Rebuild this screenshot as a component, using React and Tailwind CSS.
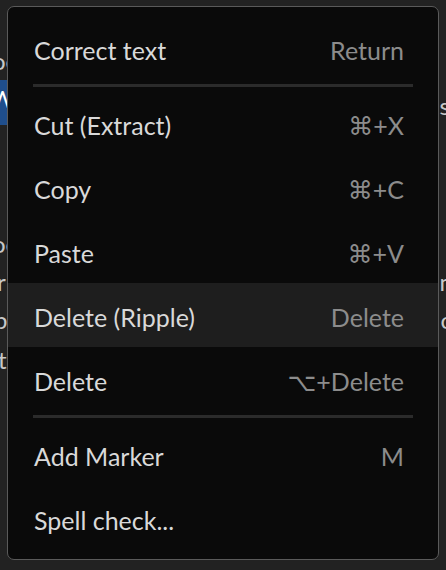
const items = [
  { label: "Correct text", key: "Return" },
  "sep",
  { label: "Cut (Extract)", key: "⌘+X" },
  { label: "Copy", key: "⌘+C" },
  { label: "Paste", key: "⌘+V" },
  { label: "Delete (Ripple)", key: "Delete", active: true },
  { label: "Delete", key: "⌥+Delete" },
  "sep",
  { label: "Add Marker", key: "M" },
  { label: "Spell check...", key: "" },
];

function Backdrop() {
  // document text sitting under the context menu
  return (
    <div className="flex flex-col text-[24px] leading-[38px] text-[#c8c8c8]">
      <div className="mt-[42px] flex justify-between">
        <span className="-ml-[8px]">oc</span>
        <span></span>
      </div>
      <div className="flex justify-between">
        <span className="-ml-[12px] bg-[#1f4e8c] px-[2px] text-white">W</span>
        <span className="-mr-[4px] pt-[7px]">s</span>
      </div>
      <div className="mt-[100px] flex justify-between">
        <span className="-ml-[8px]">oc</span>
        <span></span>
      </div>
      <div className="flex justify-between">
        <span className="-ml-[3px]">r</span>
        <span className="-mr-[7px]">n</span>
      </div>
      <div className="flex justify-between">
        <span className="-ml-[6px]">b</span>
        <span className="-mr-[8px]">o</span>
      </div>
      <div className="mt-[2px] flex justify-between">
        <span className="-ml-[2px]">t</span>
        <span></span>
      </div>
    </div>
  );
}

export default function App() {
  return (
    <div
      className="relative h-[570px] w-[446px] overflow-hidden bg-[#222222]"
      style={{ fontFamily: "Lato, 'DejaVu Sans', sans-serif" }}
    >
      <Backdrop />

      {/* Context menu */}
      <div className="absolute left-[7px] top-[6px] flex h-[554px] w-[432px] flex-col rounded-[7px] border-[1.5px] border-[#5a5a5a] bg-[#0a0a0a] pt-[9px]">
        {items.map((it, i) =>
          it === "sep" ? (
            <div key={i} className="flex h-[11px] items-center px-[25px]">
              <div className="h-[3px] w-full bg-[#2b2b2b]" />
            </div>
          ) : (
            <div
              key={i}
              className={`flex h-[64px] items-center justify-between pl-[26px] pr-[34px] pt-[6px] text-[25px] ${
                it.active ? "bg-[#1e1e1e]" : ""
              }`}
            >
              <span className="text-[#d9d9d9]">{it.label}</span>
              <span className="text-[#8c8c8c]">{it.key}</span>
            </div>
          )
        )}
      </div>
    </div>
  );
}
